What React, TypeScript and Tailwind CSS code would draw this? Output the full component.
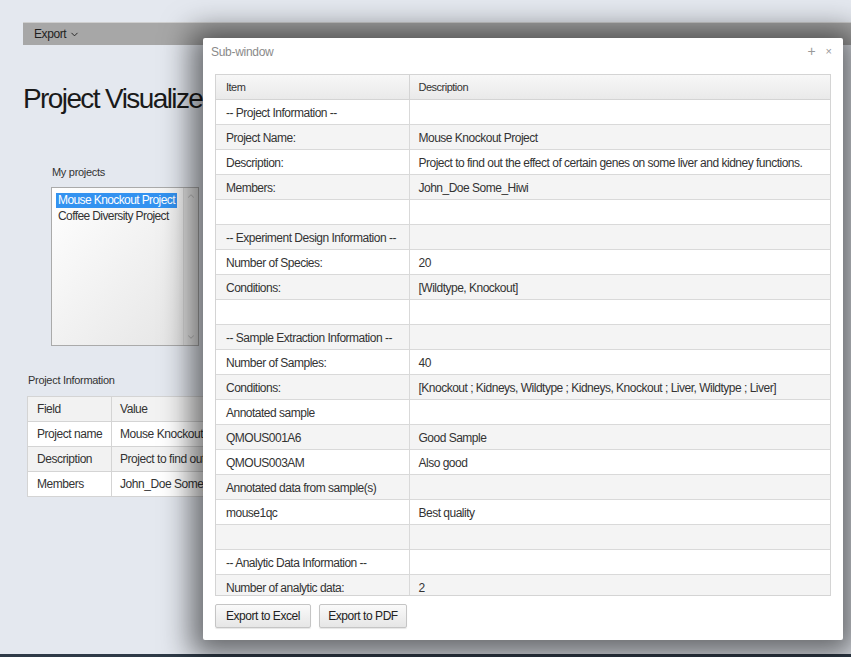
import { ChevronDown, ChevronUp } from "lucide-react";

const rows: [string, string][] = [
  ["-- Project Information --", ""],
  ["Project Name:", "Mouse Knockout Project"],
  ["Description:", "Project to find out the effect of certain genes on some liver and kidney functions."],
  ["Members:", "John_Doe Some_Hiwi"],
  ["", ""],
  ["-- Experiment Design Information --", ""],
  ["Number of Species:", "20"],
  ["Conditions:", "[Wildtype, Knockout]"],
  ["", ""],
  ["-- Sample Extraction Information --", ""],
  ["Number of Samples:", "40"],
  ["Conditions:", "[Knockout ; Kidneys, Wildtype ; Kidneys, Knockout ; Liver, Wildtype ; Liver]"],
  ["Annotated sample", ""],
  ["QMOUS001A6", "Good Sample"],
  ["QMOUS003AM", "Also good"],
  ["Annotated data from sample(s)", ""],
  ["mouse1qc", "Best quality"],
  ["", ""],
  ["-- Analytic Data Information --", ""],
  ["Number of analytic data:", "2"],
];

const infoRows: [string, string][] = [
  ["Project name", "Mouse Knockout Project"],
  ["Description", "Project to find out the effect of certain genes"],
  ["Members", "John_Doe Some_Hiwi"],
];

const SubWindow = () => {
  return (
    <div className="absolute left-[203px] top-[38px] w-[640px] h-[602px] bg-white rounded-[2px] shadow-[0_4px_30px_12px_rgba(0,0,0,0.55)] flex flex-col px-[12px]">
      <div className="h-[36px] flex items-start justify-between pt-[5px]">
        <span className="text-[12px] text-[#8a8a8a] -ml-[4px] tracking-[-0.3px]">Sub-window</span>
        <div className="flex items-center gap-[10px] text-[#999] mr-[-1px] mt-[1px]">
          <span className="text-[14px] leading-none">+</span>
          <span className="text-[11px] leading-none">×</span>
        </div>
      </div>
      <div className="h-[522px] overflow-hidden border-x border-b border-[#d4d4d4]">
        <table className="w-full table-fixed border-collapse text-[12px] text-[#333] tracking-[-0.5px]">
          <colgroup>
            <col className="w-[193px]" />
            <col />
          </colgroup>
          <thead>
            <tr className="h-[25px] bg-gradient-to-b from-[#f7f7f7] to-[#e9e9e9]">
              <th className="border border-[#d4d4d4] border-l-0 text-left font-normal text-[11px] pl-[10px]">Item</th>
              <th className="border border-[#d4d4d4] border-r-0 text-left font-normal text-[11px] pl-[9px]">Description</th>
            </tr>
          </thead>
          <tbody>
            {rows.map(([a, b], i) => (
              <tr key={i} className={`h-[25px] ${i % 2 === 1 ? "bg-[#f4f4f4]" : "bg-white"}`}>
                <td className="border border-[#d9d9d9] border-l-0 pl-[10px] pt-[1px] whitespace-nowrap">{a}</td>
                <td className="border border-[#d9d9d9] border-r-0 pl-[9px] pt-[1px] whitespace-nowrap">{b}</td>
              </tr>
            ))}
          </tbody>
        </table>
      </div>
      <div className="flex gap-[8px] mt-[8px]">
        <button className="h-[24px] w-[96px] text-[12px] tracking-[-0.45px] text-[#222] border border-[#c5c5c5] rounded-[2px] bg-gradient-to-b from-[#fafafa] to-[#e6e6e6] shadow-[0_1px_1px_rgba(0,0,0,0.1)]">
          Export to Excel
        </button>
        <button className="h-[24px] w-[88px] text-[12px] tracking-[-0.45px] text-[#222] border border-[#c5c5c5] rounded-[2px] bg-gradient-to-b from-[#fafafa] to-[#e6e6e6] shadow-[0_1px_1px_rgba(0,0,0,0.1)]">
          Export to PDF
        </button>
      </div>
    </div>
  );
};

export default function App() {
  return (
    <div className="relative w-[851px] h-[657px] overflow-hidden bg-[#e4e8ef] font-['Liberation_Sans',Arial,sans-serif]">
      <div className="pt-[22px] pl-[23px]">
        <div className="h-[23px] bg-[#a7a7a7] border-t border-[#cfcfcf] flex items-center pl-[11px] text-[12px] tracking-[-0.4px] text-[#1f1f1f]">
          Export
          <ChevronDown size={11} className="ml-[3px] mt-[1px]" strokeWidth={2} />
        </div>
        <h1 className="mt-[37px] text-[28px] leading-[34px] text-[#1a1a1a] tracking-[-1.6px] whitespace-nowrap">
          Project Visualizer
        </h1>
        <div className="ml-[29px] mt-[48px] text-[11px] tracking-[-0.3px] text-[#333]">My projects</div>
        <div className="ml-[28px] mt-[6px] w-[148px] h-[159px] border border-[#aaa] bg-gradient-to-br from-white to-[#e4e4e4] flex">
          <div className="flex-1 pl-[4px] pt-[3px] text-[12px] tracking-[-0.6px] text-[#333] whitespace-nowrap">
            <div className="inline-block bg-[#3392f0] text-white px-[2px] h-[15px] leading-[15px]">Mouse Knockout Project</div>
            <div className="px-[2px] h-[15px] leading-[15px]">Coffee Diversity Project</div>
          </div>
          <div className="w-[15px] border-l border-[#d6d6d6] bg-[#e3e3e3] flex flex-col justify-between items-center py-[3px] text-[#bbb]">
            <ChevronUp size={10} strokeWidth={2.5} />
            <ChevronDown size={10} strokeWidth={2.5} />
          </div>
        </div>
        <div className="ml-[5px] mt-[26px] text-[11px] tracking-[-0.3px] text-[#333]">Project Information</div>
        <table className="ml-[4px] mt-[8px] border-collapse text-[12px] tracking-[-0.45px] text-[#333] bg-white">
          <tbody>
            <tr className="h-[25px] bg-[#f2f2f2]">
              <td className="w-[84px] border border-[#d4d4d4] pl-[9px]">Field</td>
              <td className="w-[300px] border border-[#d4d4d4] pl-[8px]">Value</td>
            </tr>
            {infoRows.map(([a, b], i) => (
              <tr key={a} className={`h-[25px] ${i === 1 ? "bg-[#f2f2f2]" : "bg-white"}`}>
                <td className="border border-[#d4d4d4] pl-[9px] whitespace-nowrap">{a}</td>
                <td className="border border-[#d4d4d4] pl-[8px] whitespace-nowrap">{b}</td>
              </tr>
            ))}
          </tbody>
        </table>
      </div>
      <div className="absolute left-0 right-0 bottom-0 h-[3px] bg-[#2e3a47]" />
      <SubWindow />
    </div>
  );
}
